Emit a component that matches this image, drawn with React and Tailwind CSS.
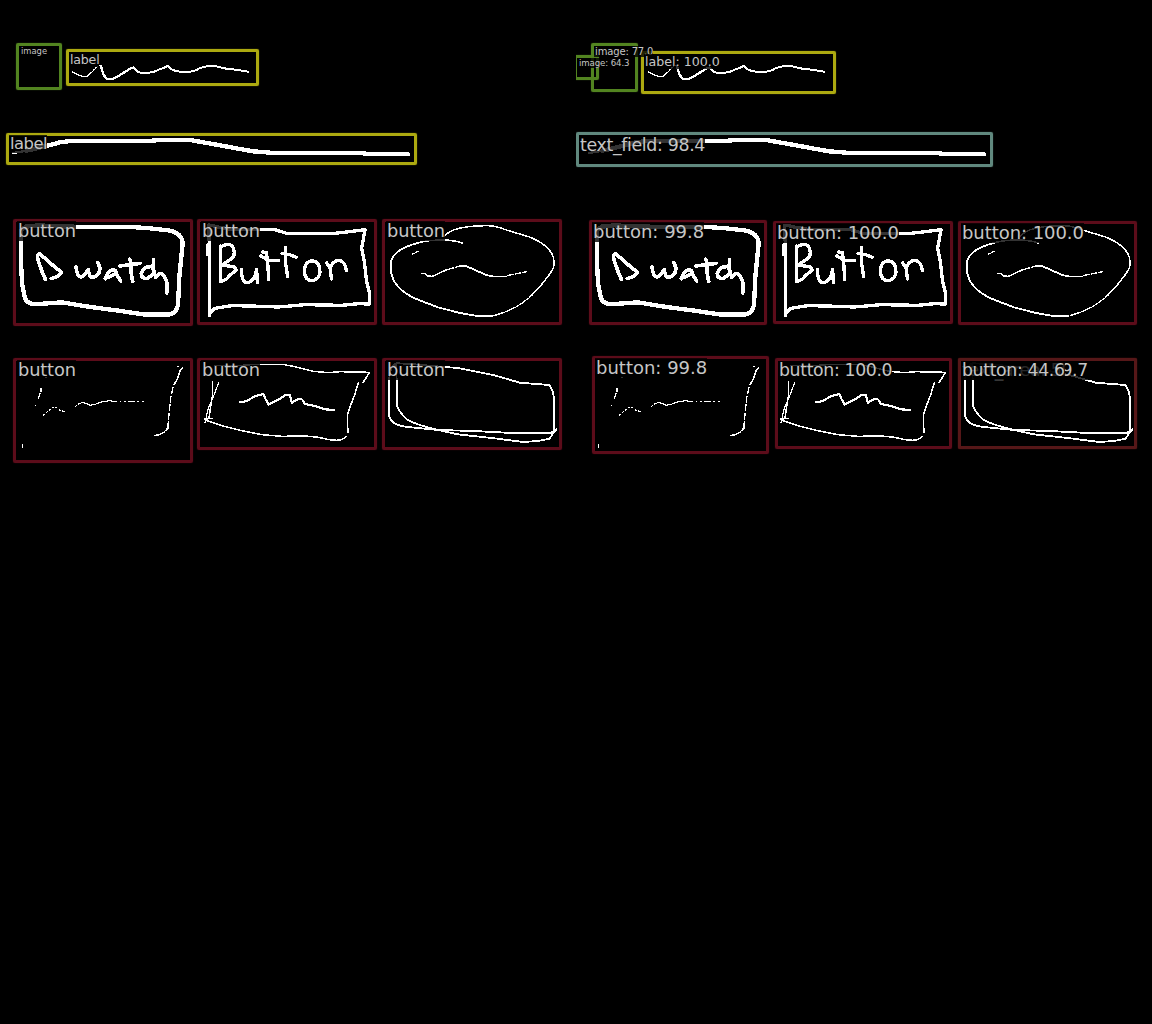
import React from "react";

const GREEN = "border-[#528420] shadow-[0_0_1px_#528420]";
const YELLOW = "border-[#aca910] shadow-[0_0_1px_#aca910]";
const TEAL = "border-[#60887e] shadow-[0_0_1px_#60887e]";
const MAROON = "border-[#5c0c1a] shadow-[0_0_1px_#5c0c1a]";
const BROWN = "border-[#561718] shadow-[0_0_1px_#561718]";

const truth = [
  { box: "left-[16px] top-[43px] w-[46px] h-[47px]", color: GREEN, tag: "left-[20px] top-[46px] text-[8.4px] leading-[10px]", text: "image" },
  { box: "left-[66px] top-[49px] w-[193px] h-[37px]", color: YELLOW, tag: "left-[69px] top-[52px] text-[12.6px] leading-[15px] tracking-[-0.2px]", text: "label" },
  { box: "left-[6px] top-[133px] w-[411px] h-[32px]", color: YELLOW, tag: "left-[9px] top-[135px] text-[16.4px] leading-[18px] tracking-[-0.5px]", text: "label" },
  { box: "left-[13px] top-[219px] w-[180px] h-[107px]", color: MAROON, tag: "left-[17px] top-[221px] text-[17.8px] leading-[20px] tracking-[-0.15px]", text: "button" },
  { box: "left-[197px] top-[219px] w-[180px] h-[106px]", color: MAROON, tag: "left-[201px] top-[221px] text-[17.8px] leading-[20px] tracking-[-0.15px]", text: "button" },
  { box: "left-[382px] top-[219px] w-[180px] h-[106px]", color: MAROON, tag: "left-[386px] top-[221px] text-[17.8px] leading-[20px] tracking-[-0.15px]", text: "button" },
  { box: "left-[13px] top-[358px] w-[180px] h-[105px]", color: MAROON, tag: "left-[17px] top-[360px] text-[17.8px] leading-[20px] tracking-[-0.15px]", text: "button" },
  { box: "left-[197px] top-[358px] w-[180px] h-[92px]", color: MAROON, tag: "left-[201px] top-[360px] text-[17.8px] leading-[20px] tracking-[-0.15px]", text: "button" },
  { box: "left-[382px] top-[358px] w-[180px] h-[92px]", color: MAROON, tag: "left-[386px] top-[360px] text-[17.8px] leading-[20px] tracking-[-0.15px]", text: "button" },
];

const predicted = [
  { box: "left-[-2px] top-[55px] w-[25px] h-[25px]", color: GREEN, tag: "left-[2px] top-[58px] text-[8.6px] leading-[10px] tracking-[-0.1px]", text: "image: 64.3" },
  { box: "left-[15px] top-[43px] w-[47px] h-[49px]", color: GREEN, tag: "left-[18px] top-[46px] text-[10px] leading-[11px] tracking-[-0.15px]", text: "image: 77.0" },
  { box: "left-[65px] top-[51px] w-[195px] h-[43px]", color: YELLOW, tag: "left-[68px] top-[54px] text-[12.6px] leading-[15px]", text: "label: 100.0" },
  { box: "left-[0px] top-[132px] w-[417px] h-[35px]", color: TEAL, tag: "left-[3px] top-[135px] text-[17.4px] leading-[20px] tracking-[-0.35px]", text: "text_field: 98.4" },
  { box: "left-[13px] top-[220px] w-[178px] h-[105px]", color: MAROON, tag: "left-[16px] top-[222px] text-[18px] leading-[20px]", text: "button: 99.8" },
  { box: "left-[197px] top-[221px] w-[180px] h-[103px]", color: MAROON, tag: "left-[200px] top-[223px] text-[18px] leading-[20px] tracking-[-0.06px]", text: "button: 100.0" },
  { box: "left-[382px] top-[221px] w-[179px] h-[104px]", color: MAROON, tag: "left-[385px] top-[223px] text-[18px] leading-[20px] tracking-[-0.06px]", text: "button: 100.0" },
  { box: "left-[16px] top-[356px] w-[177px] h-[98px]", color: MAROON, tag: "left-[19px] top-[358px] text-[18px] leading-[20px]", text: "button: 99.8" },
  { box: "left-[199px] top-[358px] w-[177px] h-[91px]", color: MAROON, tag: "left-[202px] top-[361px] text-[17.3px] leading-[19px] tracking-[-0.35px]", text: "button: 100.0" },
  { box: "left-[382px] top-[358px] w-[179px] h-[91px]", color: BROWN, tag: "left-[385px] top-[361px] text-[17.3px] leading-[19px] tracking-[-0.35px]", text: "text_area: 59.7" },
  { box: "left-[382px] top-[358px] w-[179px] h-[91px]", color: BROWN, tag: "left-[385px] top-[361px] text-[17.3px] leading-[19px] tracking-[-0.35px]", text: "button: 44.6" },
];

// Hand-drawn wireframe shared by both panels; each group is drawn at triple scale.
function Sketch() {
  return (
    <svg
      className="absolute inset-0"
      width="576"
      height="1024"
      fill="none"
      stroke="#fff"
      strokeLinecap="round"
      strokeLinejoin="round"
      shapeRendering="crispEdges"
    >
      <g transform="translate(0 30) scale(.33333)">
        <path strokeWidth="4" d="M216 126L234 135Q250 141 262 139L276 126" />
        <path strokeWidth="3.5" strokeDasharray="9 5" d="M276 126L288 113L298 107" />
        <path strokeWidth="7" d="M303 108L308 126Q314 146 327 148Q340 148 352 140L384 120Q394 112 403 113" />
        <path strokeWidth="6" d="M403 113L410 123Q420 130 442 129Q463 127 479 118L495 112L504 107L512 117Q528 126 560 126Q586 124 600 114Q624 106 644 108L672 115L705 119L745 125" />
      </g>
      <g transform="translate(0 120) scale(.33333)">
        <path strokeWidth="7" d="M39 99L80 92" />
        <path strokeWidth="13" d="M80 92L115 84L150 75L180 67L210 63H445L480 60L570 60L610 67L660 76L720 87L760 94L810 98L860 100H1090L1115 103H1225" />
      </g>
      <g transform="translate(5 210) scale(.33333)">
        <path strokeWidth="13" d="M48 90L49 60L62 50L100 46L160 49L250 51H300L360 50L425 54L490 61Q531 68 533 100L523 200L519 285Q515 311 490 314H420L340 302L250 290L170 277L100 282Q70 286 60 265L51 220L47 130L48 90" />
        <path strokeWidth="11" d="M121 208L110 182L99 150Q95 132 104 132L125 149L148 170L169 186Q168 198 139 206M213 171Q217 202 229 201Q240 196 250 179Q253 202 263 202Q284 198 285 175L279 158M301 206Q310 180 325 179Q332 179 336 195L347 213M331 192L304 204M374 148Q383 165 377 180L383 214M344 168L376 164L405 160M439 170Q416 168 409 191Q409 206 425 206L443 194M446 149L444 175L452 202Q465 184 473 194Q486 207 487 229L485 249" />
      </g>
      <g transform="translate(195 210) scale(.33333)">
        <path strokeWidth="10" d="M43 317L44 220V135L41 45L80 53L115 59" />
        <path strokeWidth="14" d="M39 107V132" />
        <path strokeWidth="10" d="M115 59H240L275 70H420L455 66L510 59L500 115L508 155L515 215L524 250V282L490 281L440 286L330 284L250 291L170 288L110 287L60 295L45 310" />
        <path strokeWidth="10" d="M77 108V214Q96 211 103 197L124 180L118 171L82 165L105 149Q121 139 117 123Q114 104 102 104Q83 104 77 112M139 178Q139 218 158 218Q179 214 185 178L187 218M202 126L214 127L218 155L221 209M198 138L220 151L250 151M271 112V156L278 200M261 131L281 133L304 142M354 153Q329 152 328 184Q330 212 352 212Q373 208 375 186Q375 155 354 153M395 159L406 176L409 207M406 173Q413 154 430 151Q451 153 454 181" />
      </g>
      <g transform="translate(378 210) scale(.33333)">
        <path strokeWidth="4.5" d="M200 78Q224 47 330 47Q352 47 385 60L455 81Q529 112 528 158Q531 172 511 198Q486 232 460 257" />
        <path strokeWidth="4" strokeDasharray="8 4" d="M460 257L425 285L390 303L342 319" />
        <path strokeWidth="5.5" d="M342 319H304L246 309L180 292L125 271Q36 237 38 168Q36 119 126 97" />
        <path strokeWidth="4.5" d="M126 97Q160 89 205 90Q238 93 254 100M131 190H140L148 198L163 199L177 193L208 178" />
        <path strokeWidth="4" strokeDasharray="6 5" d="M103 133L123 123M211 178L246 168" />
        <path strokeWidth="4" strokeDasharray="16 6" d="M390 196L445 185" />
        <path strokeWidth="5.5" d="M248 167L264 168L293 181L328 196L344 199" />
        <path strokeWidth="4" d="M344 199H386" />
      </g>
      <g transform="translate(5 350) scale(.33333)" strokeWidth="3.5" strokeLinecap="butt">
        <path d="M108 114V125M105 130L99 148M92 165V169M53 282V294" />
        <path strokeDasharray="7 5" d="M120 83H127M114 197L130 183L150 169L163 180L181 186M210 170L222 161" />
        <path d="M222 161L234 157L247 162L256 166L273 162L290 156L315 152" />
        <path strokeDasharray="22 7 5 9" d="M315 152L325 154H362M368 154H418" />
        <path strokeWidth="4.5" d="M515 49H523M533 52L526 60L517 87L506 106" />
        <path strokeWidth="4" strokeDasharray="22 4" d="M504 111L497 145L492 190L490 232" />
        <path strokeWidth="5.5" d="M490 219L489 234L481 244" />
        <path strokeWidth="4.5" d="M481 244L466 253L448 257" />
      </g>
      <g transform="translate(195 350) scale(.33333)" strokeWidth="4.5">
        <path d="M60 46L130 47L180 43H262L300 50L355 64L400 68L435 65L524 67L504 98M490 98L479 135L464 173Q457 190 457 205L459 248M454 259Q442 271 425 271L401 269L370 262L330 258L260 259L200 254L140 242L80 227L32 211M52 95L53 135L47 170L42 205M30 207L52 205" />
        <path strokeWidth="3.5" d="M71 98L59 130L40 175L30 217" />
        <path strokeWidth="6.5" d="M136 156L153 154L180 139L205 132L212 148L221 164L252 148L272 135H284L291 159Q311 142 322 149L329 162L360 168L390 178L418 180" />
      </g>
      <g transform="translate(378 350) scale(.33333)" strokeWidth="5.5">
        <path d="M33 95V190Q32 225 90 231L180 240L290 243L400 249L525 250L535 238M56 95V155Q55 180 88 209Q110 223 180 240L240 253L350 265L435 276L480 273L515 266L528 245V145Q525 117 513 105L425 98L350 76L290 64L240 54L200 51L100 42L60 40Q36 40 33 95M56 95L55 40M512 250L532 242" />
      </g>
    </svg>
  );
}

function Panel({ items }) {
  return (
    <section className="relative h-[1024px] w-[576px] shrink-0 overflow-hidden">
      <Sketch />
      {items.map((d, i) => (
        <div key={i} className={`absolute rounded-[2px] border-[3px] ${d.box} ${d.color}`} />
      ))}
      {items.map((d, i) => (
        <span key={i} className={`absolute whitespace-nowrap bg-black/80 pl-px text-[#c6c6c6] ${d.tag}`}>
          {d.text}
        </span>
      ))}
    </section>
  );
}

export default function App() {
  return (
    <main className="flex h-[1024px] w-[1152px] overflow-hidden bg-black font-['DejaVu_Sans',sans-serif]">
      <Panel items={truth} />
      <Panel items={predicted} />
    </main>
  );
}
